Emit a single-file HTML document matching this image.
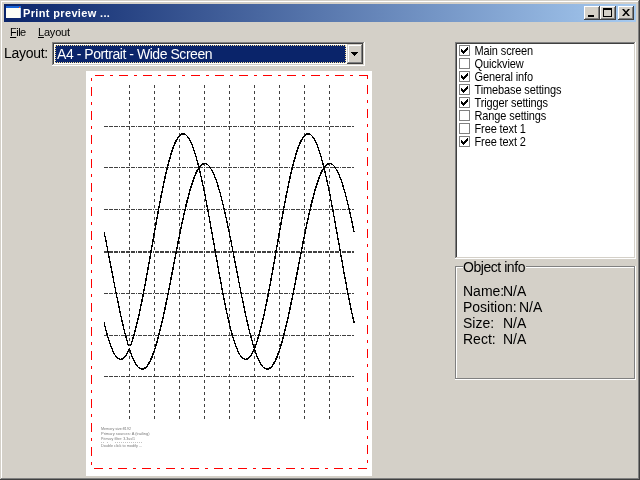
<!DOCTYPE html>
<html><head><meta charset="utf-8"><style>
*{margin:0;padding:0;box-sizing:border-box}
html,body{width:640px;height:480px;overflow:hidden;background:#D4D0C8;font-family:'Liberation Sans',sans-serif;}
.a{position:absolute}
.g{transform:translateZ(0)}
.t{position:absolute;white-space:pre;color:#000;transform:translateZ(0)}
.lt{position:absolute;font-size:11px;line-height:13px;letter-spacing:-0.12px;color:#000;white-space:pre;transform:translateZ(0) scaleY(1.12);transform-origin:0 10.3px}
.btn{position:absolute;width:16px;height:14px;background:#D4D0C8;box-shadow:inset -1px -1px #404040,inset 1px 1px #fff,inset -2px -2px #808080,inset 2px 2px #D4D0C8}
</style></head><body>
<div class="a" style="left:0;top:0;width:640px;height:480px;background:#D4D0C8;box-shadow:inset -1px -1px #404040,inset 1px 1px #D4D0C8,inset -2px -2px #808080,inset 2px 2px #fff"></div>
<div class="a" style="left:4px;top:4px;width:632px;height:18px;background:linear-gradient(to right,#0A246A,#A6CAF0)"></div>
<div class="a" style="left:6px;top:6px;width:15px;height:12px;background:#fdfdf5;border-top:2px solid #1a64d8;box-shadow:inset -1px 0 #c8d8f0"></div>
<div class="a" style="left:19px;top:7px;width:1px;height:1px;background:#f06020"></div>
<div class="t" style="left:23px;top:4px;height:18px;line-height:18px;font-size:11px;font-weight:bold;color:#fff;letter-spacing:0.35px">Print preview ...</div>
<div class="btn" style="left:584px;top:6px"><div class="a" style="left:4px;top:9px;width:6px;height:2px;background:#000"></div></div>
<div class="btn" style="left:600px;top:6px"><div class="a" style="left:3px;top:2px;width:9px;height:9px;border:1px solid #000;border-top-width:2px"></div></div>
<div class="btn" style="left:618px;top:6px"><svg class="a" style="left:4px;top:3px" width="8" height="7"><path d="M0 0h2l2 2.5 2-2.5h2l-3 3.5 3 3.5h-2l-2-2.5-2 2.5h-2l3-3.5z" fill="#000"/></svg></div>
<div class="t" style="left:10px;top:23px;height:18px;line-height:18px;font-size:11px;letter-spacing:-0.5px"><span style="text-decoration:underline">F</span>ile</div>
<div class="t" style="left:38px;top:23px;height:18px;line-height:18px;font-size:11px;letter-spacing:-0.2px"><span style="text-decoration:underline">L</span>ayout</div>
<div class="t" style="left:4px;top:41px;height:24px;line-height:24px;font-size:14px;letter-spacing:-0.3px">Layout:</div>
<div class="a" style="left:52px;top:42px;width:313px;height:24px;background:#fff;box-shadow:inset -1px -1px #fff,inset 1px 1px #808080,inset -2px -2px #D4D0C8,inset 2px 2px #404040"></div>
<div class="a" style="left:55px;top:45px;width:291px;height:18px;background:#0A246A;outline:1px dotted #F5DB95;outline-offset:-1px"></div>
<div class="t" style="left:57px;top:44px;height:20px;line-height:20px;font-size:14px;letter-spacing:-0.45px;color:#fff">A4 - Portrait - Wide Screen</div>
<div class="btn" style="left:347px;top:44px;width:16px;height:20px;box-shadow:inset -1px -1px #404040,inset 1px 1px #D4D0C8,inset -2px -2px #808080,inset 2px 2px #fff"><svg class="a" style="left:4px;top:8px" width="7" height="4" shape-rendering="crispEdges"><rect x="0" y="0" width="7" height="1"/><rect x="1" y="1" width="5" height="1"/><rect x="2" y="2" width="3" height="1"/><rect x="3" y="3" width="1" height="1"/></svg></div>
<div class="a" style="left:86px;top:71px;width:286px;height:405px;background:#fff"><svg width="286" height="405" viewBox="0 0 286 405" style="position:absolute;left:0;top:0"><g shape-rendering="crispEdges"><rect x="9" y="4" width="9" height="1" fill="#FF0000"/><rect x="24" y="4" width="3" height="1" fill="#FF0000"/><rect x="33" y="4" width="9" height="1" fill="#FF0000"/><rect x="48" y="4" width="3" height="1" fill="#FF0000"/><rect x="57" y="4" width="9" height="1" fill="#FF0000"/><rect x="72" y="4" width="3" height="1" fill="#FF0000"/><rect x="81" y="4" width="9" height="1" fill="#FF0000"/><rect x="96" y="4" width="3" height="1" fill="#FF0000"/><rect x="105" y="4" width="9" height="1" fill="#FF0000"/><rect x="120" y="4" width="3" height="1" fill="#FF0000"/><rect x="129" y="4" width="9" height="1" fill="#FF0000"/><rect x="144" y="4" width="3" height="1" fill="#FF0000"/><rect x="153" y="4" width="9" height="1" fill="#FF0000"/><rect x="168" y="4" width="3" height="1" fill="#FF0000"/><rect x="177" y="4" width="9" height="1" fill="#FF0000"/><rect x="192" y="4" width="3" height="1" fill="#FF0000"/><rect x="201" y="4" width="9" height="1" fill="#FF0000"/><rect x="216" y="4" width="3" height="1" fill="#FF0000"/><rect x="225" y="4" width="9" height="1" fill="#FF0000"/><rect x="240" y="4" width="3" height="1" fill="#FF0000"/><rect x="249" y="4" width="9" height="1" fill="#FF0000"/><rect x="264" y="4" width="3" height="1" fill="#FF0000"/><rect x="273" y="4" width="9" height="1" fill="#FF0000"/><rect x="8" y="397" width="9" height="1" fill="#FF0000"/><rect x="23" y="397" width="3" height="1" fill="#FF0000"/><rect x="32" y="397" width="9" height="1" fill="#FF0000"/><rect x="47" y="397" width="3" height="1" fill="#FF0000"/><rect x="56" y="397" width="9" height="1" fill="#FF0000"/><rect x="71" y="397" width="3" height="1" fill="#FF0000"/><rect x="80" y="397" width="9" height="1" fill="#FF0000"/><rect x="95" y="397" width="3" height="1" fill="#FF0000"/><rect x="104" y="397" width="9" height="1" fill="#FF0000"/><rect x="119" y="397" width="3" height="1" fill="#FF0000"/><rect x="128" y="397" width="9" height="1" fill="#FF0000"/><rect x="143" y="397" width="3" height="1" fill="#FF0000"/><rect x="152" y="397" width="9" height="1" fill="#FF0000"/><rect x="167" y="397" width="3" height="1" fill="#FF0000"/><rect x="176" y="397" width="9" height="1" fill="#FF0000"/><rect x="191" y="397" width="3" height="1" fill="#FF0000"/><rect x="200" y="397" width="9" height="1" fill="#FF0000"/><rect x="215" y="397" width="3" height="1" fill="#FF0000"/><rect x="224" y="397" width="9" height="1" fill="#FF0000"/><rect x="239" y="397" width="3" height="1" fill="#FF0000"/><rect x="248" y="397" width="9" height="1" fill="#FF0000"/><rect x="263" y="397" width="3" height="1" fill="#FF0000"/><rect x="272" y="397" width="9" height="1" fill="#FF0000"/><rect x="5" y="16" width="1" height="9" fill="#FF0000"/><rect x="5" y="7" width="1" height="3" fill="#FF0000"/><rect x="5" y="40" width="1" height="9" fill="#FF0000"/><rect x="5" y="31" width="1" height="3" fill="#FF0000"/><rect x="5" y="64" width="1" height="9" fill="#FF0000"/><rect x="5" y="55" width="1" height="3" fill="#FF0000"/><rect x="5" y="88" width="1" height="9" fill="#FF0000"/><rect x="5" y="79" width="1" height="3" fill="#FF0000"/><rect x="5" y="112" width="1" height="9" fill="#FF0000"/><rect x="5" y="103" width="1" height="3" fill="#FF0000"/><rect x="5" y="136" width="1" height="9" fill="#FF0000"/><rect x="5" y="127" width="1" height="3" fill="#FF0000"/><rect x="5" y="160" width="1" height="9" fill="#FF0000"/><rect x="5" y="151" width="1" height="3" fill="#FF0000"/><rect x="5" y="184" width="1" height="9" fill="#FF0000"/><rect x="5" y="175" width="1" height="3" fill="#FF0000"/><rect x="5" y="208" width="1" height="9" fill="#FF0000"/><rect x="5" y="199" width="1" height="3" fill="#FF0000"/><rect x="5" y="232" width="1" height="9" fill="#FF0000"/><rect x="5" y="223" width="1" height="3" fill="#FF0000"/><rect x="5" y="256" width="1" height="9" fill="#FF0000"/><rect x="5" y="247" width="1" height="3" fill="#FF0000"/><rect x="5" y="280" width="1" height="9" fill="#FF0000"/><rect x="5" y="271" width="1" height="3" fill="#FF0000"/><rect x="5" y="304" width="1" height="9" fill="#FF0000"/><rect x="5" y="295" width="1" height="3" fill="#FF0000"/><rect x="5" y="328" width="1" height="9" fill="#FF0000"/><rect x="5" y="319" width="1" height="3" fill="#FF0000"/><rect x="5" y="352" width="1" height="9" fill="#FF0000"/><rect x="5" y="343" width="1" height="3" fill="#FF0000"/><rect x="5" y="376" width="1" height="9" fill="#FF0000"/><rect x="5" y="367" width="1" height="3" fill="#FF0000"/><rect x="5" y="391" width="1" height="3" fill="#FF0000"/><rect x="281" y="14" width="1" height="9" fill="#FF0000"/><rect x="281" y="5" width="1" height="3" fill="#FF0000"/><rect x="281" y="38" width="1" height="9" fill="#FF0000"/><rect x="281" y="29" width="1" height="3" fill="#FF0000"/><rect x="281" y="62" width="1" height="9" fill="#FF0000"/><rect x="281" y="53" width="1" height="3" fill="#FF0000"/><rect x="281" y="86" width="1" height="9" fill="#FF0000"/><rect x="281" y="77" width="1" height="3" fill="#FF0000"/><rect x="281" y="110" width="1" height="9" fill="#FF0000"/><rect x="281" y="101" width="1" height="3" fill="#FF0000"/><rect x="281" y="134" width="1" height="9" fill="#FF0000"/><rect x="281" y="125" width="1" height="3" fill="#FF0000"/><rect x="281" y="158" width="1" height="9" fill="#FF0000"/><rect x="281" y="149" width="1" height="3" fill="#FF0000"/><rect x="281" y="182" width="1" height="9" fill="#FF0000"/><rect x="281" y="173" width="1" height="3" fill="#FF0000"/><rect x="281" y="206" width="1" height="9" fill="#FF0000"/><rect x="281" y="197" width="1" height="3" fill="#FF0000"/><rect x="281" y="230" width="1" height="9" fill="#FF0000"/><rect x="281" y="221" width="1" height="3" fill="#FF0000"/><rect x="281" y="254" width="1" height="9" fill="#FF0000"/><rect x="281" y="245" width="1" height="3" fill="#FF0000"/><rect x="281" y="278" width="1" height="9" fill="#FF0000"/><rect x="281" y="269" width="1" height="3" fill="#FF0000"/><rect x="281" y="302" width="1" height="9" fill="#FF0000"/><rect x="281" y="293" width="1" height="3" fill="#FF0000"/><rect x="281" y="326" width="1" height="9" fill="#FF0000"/><rect x="281" y="317" width="1" height="3" fill="#FF0000"/><rect x="281" y="350" width="1" height="9" fill="#FF0000"/><rect x="281" y="341" width="1" height="3" fill="#FF0000"/><rect x="281" y="374" width="1" height="9" fill="#FF0000"/><rect x="281" y="365" width="1" height="3" fill="#FF0000"/><rect x="281" y="389" width="1" height="3" fill="#FF0000"/><rect x="43" y="14" width="1" height="3" fill="#404040"/><rect x="43" y="20" width="1" height="3" fill="#404040"/><rect x="43" y="26" width="1" height="3" fill="#404040"/><rect x="43" y="32" width="1" height="3" fill="#404040"/><rect x="43" y="38" width="1" height="3" fill="#404040"/><rect x="43" y="44" width="1" height="3" fill="#404040"/><rect x="43" y="50" width="1" height="3" fill="#404040"/><rect x="43" y="56" width="1" height="3" fill="#404040"/><rect x="43" y="62" width="1" height="3" fill="#404040"/><rect x="43" y="68" width="1" height="3" fill="#404040"/><rect x="43" y="74" width="1" height="3" fill="#404040"/><rect x="43" y="80" width="1" height="3" fill="#404040"/><rect x="43" y="86" width="1" height="3" fill="#404040"/><rect x="43" y="92" width="1" height="3" fill="#404040"/><rect x="43" y="98" width="1" height="3" fill="#404040"/><rect x="43" y="104" width="1" height="3" fill="#404040"/><rect x="43" y="110" width="1" height="3" fill="#404040"/><rect x="43" y="116" width="1" height="3" fill="#404040"/><rect x="43" y="122" width="1" height="3" fill="#404040"/><rect x="43" y="128" width="1" height="3" fill="#404040"/><rect x="43" y="134" width="1" height="3" fill="#404040"/><rect x="43" y="140" width="1" height="3" fill="#404040"/><rect x="43" y="146" width="1" height="3" fill="#404040"/><rect x="43" y="152" width="1" height="3" fill="#404040"/><rect x="43" y="158" width="1" height="3" fill="#404040"/><rect x="43" y="164" width="1" height="3" fill="#404040"/><rect x="43" y="170" width="1" height="3" fill="#404040"/><rect x="43" y="176" width="1" height="3" fill="#404040"/><rect x="43" y="183" width="1" height="3" fill="#404040"/><rect x="43" y="189" width="1" height="3" fill="#404040"/><rect x="43" y="195" width="1" height="3" fill="#404040"/><rect x="43" y="201" width="1" height="3" fill="#404040"/><rect x="43" y="207" width="1" height="3" fill="#404040"/><rect x="43" y="213" width="1" height="3" fill="#404040"/><rect x="43" y="219" width="1" height="3" fill="#404040"/><rect x="43" y="225" width="1" height="3" fill="#404040"/><rect x="43" y="231" width="1" height="3" fill="#404040"/><rect x="43" y="237" width="1" height="3" fill="#404040"/><rect x="43" y="243" width="1" height="3" fill="#404040"/><rect x="43" y="249" width="1" height="3" fill="#404040"/><rect x="43" y="255" width="1" height="3" fill="#404040"/><rect x="43" y="261" width="1" height="3" fill="#404040"/><rect x="43" y="267" width="1" height="3" fill="#404040"/><rect x="43" y="273" width="1" height="3" fill="#404040"/><rect x="43" y="279" width="1" height="3" fill="#404040"/><rect x="43" y="285" width="1" height="3" fill="#404040"/><rect x="43" y="291" width="1" height="3" fill="#404040"/><rect x="43" y="297" width="1" height="3" fill="#404040"/><rect x="43" y="303" width="1" height="3" fill="#404040"/><rect x="43" y="309" width="1" height="3" fill="#404040"/><rect x="43" y="315" width="1" height="3" fill="#404040"/><rect x="43" y="321" width="1" height="3" fill="#404040"/><rect x="43" y="327" width="1" height="3" fill="#404040"/><rect x="43" y="333" width="1" height="3" fill="#404040"/><rect x="43" y="339" width="1" height="3" fill="#404040"/><rect x="43" y="345" width="1" height="3" fill="#404040"/><rect x="68" y="14" width="1" height="3" fill="#404040"/><rect x="68" y="20" width="1" height="3" fill="#404040"/><rect x="68" y="26" width="1" height="3" fill="#404040"/><rect x="68" y="32" width="1" height="3" fill="#404040"/><rect x="68" y="38" width="1" height="3" fill="#404040"/><rect x="68" y="44" width="1" height="3" fill="#404040"/><rect x="68" y="50" width="1" height="3" fill="#404040"/><rect x="68" y="56" width="1" height="3" fill="#404040"/><rect x="68" y="62" width="1" height="3" fill="#404040"/><rect x="68" y="68" width="1" height="3" fill="#404040"/><rect x="68" y="74" width="1" height="3" fill="#404040"/><rect x="68" y="80" width="1" height="3" fill="#404040"/><rect x="68" y="86" width="1" height="3" fill="#404040"/><rect x="68" y="92" width="1" height="3" fill="#404040"/><rect x="68" y="98" width="1" height="3" fill="#404040"/><rect x="68" y="104" width="1" height="3" fill="#404040"/><rect x="68" y="110" width="1" height="3" fill="#404040"/><rect x="68" y="116" width="1" height="3" fill="#404040"/><rect x="68" y="122" width="1" height="3" fill="#404040"/><rect x="68" y="128" width="1" height="3" fill="#404040"/><rect x="68" y="134" width="1" height="3" fill="#404040"/><rect x="68" y="140" width="1" height="3" fill="#404040"/><rect x="68" y="146" width="1" height="3" fill="#404040"/><rect x="68" y="152" width="1" height="3" fill="#404040"/><rect x="68" y="158" width="1" height="3" fill="#404040"/><rect x="68" y="164" width="1" height="3" fill="#404040"/><rect x="68" y="170" width="1" height="3" fill="#404040"/><rect x="68" y="176" width="1" height="3" fill="#404040"/><rect x="68" y="183" width="1" height="3" fill="#404040"/><rect x="68" y="189" width="1" height="3" fill="#404040"/><rect x="68" y="195" width="1" height="3" fill="#404040"/><rect x="68" y="201" width="1" height="3" fill="#404040"/><rect x="68" y="207" width="1" height="3" fill="#404040"/><rect x="68" y="213" width="1" height="3" fill="#404040"/><rect x="68" y="219" width="1" height="3" fill="#404040"/><rect x="68" y="225" width="1" height="3" fill="#404040"/><rect x="68" y="231" width="1" height="3" fill="#404040"/><rect x="68" y="237" width="1" height="3" fill="#404040"/><rect x="68" y="243" width="1" height="3" fill="#404040"/><rect x="68" y="249" width="1" height="3" fill="#404040"/><rect x="68" y="255" width="1" height="3" fill="#404040"/><rect x="68" y="261" width="1" height="3" fill="#404040"/><rect x="68" y="267" width="1" height="3" fill="#404040"/><rect x="68" y="273" width="1" height="3" fill="#404040"/><rect x="68" y="279" width="1" height="3" fill="#404040"/><rect x="68" y="285" width="1" height="3" fill="#404040"/><rect x="68" y="291" width="1" height="3" fill="#404040"/><rect x="68" y="297" width="1" height="3" fill="#404040"/><rect x="68" y="303" width="1" height="3" fill="#404040"/><rect x="68" y="309" width="1" height="3" fill="#404040"/><rect x="68" y="315" width="1" height="3" fill="#404040"/><rect x="68" y="321" width="1" height="3" fill="#404040"/><rect x="68" y="327" width="1" height="3" fill="#404040"/><rect x="68" y="333" width="1" height="3" fill="#404040"/><rect x="68" y="339" width="1" height="3" fill="#404040"/><rect x="68" y="345" width="1" height="3" fill="#404040"/><rect x="93" y="14" width="1" height="3" fill="#404040"/><rect x="93" y="20" width="1" height="3" fill="#404040"/><rect x="93" y="26" width="1" height="3" fill="#404040"/><rect x="93" y="32" width="1" height="3" fill="#404040"/><rect x="93" y="38" width="1" height="3" fill="#404040"/><rect x="93" y="44" width="1" height="3" fill="#404040"/><rect x="93" y="50" width="1" height="3" fill="#404040"/><rect x="93" y="56" width="1" height="3" fill="#404040"/><rect x="93" y="62" width="1" height="3" fill="#404040"/><rect x="93" y="68" width="1" height="3" fill="#404040"/><rect x="93" y="74" width="1" height="3" fill="#404040"/><rect x="93" y="80" width="1" height="3" fill="#404040"/><rect x="93" y="86" width="1" height="3" fill="#404040"/><rect x="93" y="92" width="1" height="3" fill="#404040"/><rect x="93" y="98" width="1" height="3" fill="#404040"/><rect x="93" y="104" width="1" height="3" fill="#404040"/><rect x="93" y="110" width="1" height="3" fill="#404040"/><rect x="93" y="116" width="1" height="3" fill="#404040"/><rect x="93" y="122" width="1" height="3" fill="#404040"/><rect x="93" y="128" width="1" height="3" fill="#404040"/><rect x="93" y="134" width="1" height="3" fill="#404040"/><rect x="93" y="140" width="1" height="3" fill="#404040"/><rect x="93" y="146" width="1" height="3" fill="#404040"/><rect x="93" y="152" width="1" height="3" fill="#404040"/><rect x="93" y="158" width="1" height="3" fill="#404040"/><rect x="93" y="164" width="1" height="3" fill="#404040"/><rect x="93" y="170" width="1" height="3" fill="#404040"/><rect x="93" y="176" width="1" height="3" fill="#404040"/><rect x="93" y="183" width="1" height="3" fill="#404040"/><rect x="93" y="189" width="1" height="3" fill="#404040"/><rect x="93" y="195" width="1" height="3" fill="#404040"/><rect x="93" y="201" width="1" height="3" fill="#404040"/><rect x="93" y="207" width="1" height="3" fill="#404040"/><rect x="93" y="213" width="1" height="3" fill="#404040"/><rect x="93" y="219" width="1" height="3" fill="#404040"/><rect x="93" y="225" width="1" height="3" fill="#404040"/><rect x="93" y="231" width="1" height="3" fill="#404040"/><rect x="93" y="237" width="1" height="3" fill="#404040"/><rect x="93" y="243" width="1" height="3" fill="#404040"/><rect x="93" y="249" width="1" height="3" fill="#404040"/><rect x="93" y="255" width="1" height="3" fill="#404040"/><rect x="93" y="261" width="1" height="3" fill="#404040"/><rect x="93" y="267" width="1" height="3" fill="#404040"/><rect x="93" y="273" width="1" height="3" fill="#404040"/><rect x="93" y="279" width="1" height="3" fill="#404040"/><rect x="93" y="285" width="1" height="3" fill="#404040"/><rect x="93" y="291" width="1" height="3" fill="#404040"/><rect x="93" y="297" width="1" height="3" fill="#404040"/><rect x="93" y="303" width="1" height="3" fill="#404040"/><rect x="93" y="309" width="1" height="3" fill="#404040"/><rect x="93" y="315" width="1" height="3" fill="#404040"/><rect x="93" y="321" width="1" height="3" fill="#404040"/><rect x="93" y="327" width="1" height="3" fill="#404040"/><rect x="93" y="333" width="1" height="3" fill="#404040"/><rect x="93" y="339" width="1" height="3" fill="#404040"/><rect x="93" y="345" width="1" height="3" fill="#404040"/><rect x="118" y="14" width="1" height="3" fill="#404040"/><rect x="118" y="20" width="1" height="3" fill="#404040"/><rect x="118" y="26" width="1" height="3" fill="#404040"/><rect x="118" y="32" width="1" height="3" fill="#404040"/><rect x="118" y="38" width="1" height="3" fill="#404040"/><rect x="118" y="44" width="1" height="3" fill="#404040"/><rect x="118" y="50" width="1" height="3" fill="#404040"/><rect x="118" y="56" width="1" height="3" fill="#404040"/><rect x="118" y="62" width="1" height="3" fill="#404040"/><rect x="118" y="68" width="1" height="3" fill="#404040"/><rect x="118" y="74" width="1" height="3" fill="#404040"/><rect x="118" y="80" width="1" height="3" fill="#404040"/><rect x="118" y="86" width="1" height="3" fill="#404040"/><rect x="118" y="92" width="1" height="3" fill="#404040"/><rect x="118" y="98" width="1" height="3" fill="#404040"/><rect x="118" y="104" width="1" height="3" fill="#404040"/><rect x="118" y="110" width="1" height="3" fill="#404040"/><rect x="118" y="116" width="1" height="3" fill="#404040"/><rect x="118" y="122" width="1" height="3" fill="#404040"/><rect x="118" y="128" width="1" height="3" fill="#404040"/><rect x="118" y="134" width="1" height="3" fill="#404040"/><rect x="118" y="140" width="1" height="3" fill="#404040"/><rect x="118" y="146" width="1" height="3" fill="#404040"/><rect x="118" y="152" width="1" height="3" fill="#404040"/><rect x="118" y="158" width="1" height="3" fill="#404040"/><rect x="118" y="164" width="1" height="3" fill="#404040"/><rect x="118" y="170" width="1" height="3" fill="#404040"/><rect x="118" y="176" width="1" height="3" fill="#404040"/><rect x="118" y="183" width="1" height="3" fill="#404040"/><rect x="118" y="189" width="1" height="3" fill="#404040"/><rect x="118" y="195" width="1" height="3" fill="#404040"/><rect x="118" y="201" width="1" height="3" fill="#404040"/><rect x="118" y="207" width="1" height="3" fill="#404040"/><rect x="118" y="213" width="1" height="3" fill="#404040"/><rect x="118" y="219" width="1" height="3" fill="#404040"/><rect x="118" y="225" width="1" height="3" fill="#404040"/><rect x="118" y="231" width="1" height="3" fill="#404040"/><rect x="118" y="237" width="1" height="3" fill="#404040"/><rect x="118" y="243" width="1" height="3" fill="#404040"/><rect x="118" y="249" width="1" height="3" fill="#404040"/><rect x="118" y="255" width="1" height="3" fill="#404040"/><rect x="118" y="261" width="1" height="3" fill="#404040"/><rect x="118" y="267" width="1" height="3" fill="#404040"/><rect x="118" y="273" width="1" height="3" fill="#404040"/><rect x="118" y="279" width="1" height="3" fill="#404040"/><rect x="118" y="285" width="1" height="3" fill="#404040"/><rect x="118" y="291" width="1" height="3" fill="#404040"/><rect x="118" y="297" width="1" height="3" fill="#404040"/><rect x="118" y="303" width="1" height="3" fill="#404040"/><rect x="118" y="309" width="1" height="3" fill="#404040"/><rect x="118" y="315" width="1" height="3" fill="#404040"/><rect x="118" y="321" width="1" height="3" fill="#404040"/><rect x="118" y="327" width="1" height="3" fill="#404040"/><rect x="118" y="333" width="1" height="3" fill="#404040"/><rect x="118" y="339" width="1" height="3" fill="#404040"/><rect x="118" y="345" width="1" height="3" fill="#404040"/><rect x="143" y="14" width="1" height="3" fill="#404040"/><rect x="143" y="20" width="1" height="3" fill="#404040"/><rect x="143" y="26" width="1" height="3" fill="#404040"/><rect x="143" y="32" width="1" height="3" fill="#404040"/><rect x="143" y="38" width="1" height="3" fill="#404040"/><rect x="143" y="44" width="1" height="3" fill="#404040"/><rect x="143" y="50" width="1" height="3" fill="#404040"/><rect x="143" y="56" width="1" height="3" fill="#404040"/><rect x="143" y="62" width="1" height="3" fill="#404040"/><rect x="143" y="68" width="1" height="3" fill="#404040"/><rect x="143" y="74" width="1" height="3" fill="#404040"/><rect x="143" y="80" width="1" height="3" fill="#404040"/><rect x="143" y="86" width="1" height="3" fill="#404040"/><rect x="143" y="92" width="1" height="3" fill="#404040"/><rect x="143" y="98" width="1" height="3" fill="#404040"/><rect x="143" y="104" width="1" height="3" fill="#404040"/><rect x="143" y="110" width="1" height="3" fill="#404040"/><rect x="143" y="116" width="1" height="3" fill="#404040"/><rect x="143" y="122" width="1" height="3" fill="#404040"/><rect x="143" y="128" width="1" height="3" fill="#404040"/><rect x="143" y="134" width="1" height="3" fill="#404040"/><rect x="143" y="140" width="1" height="3" fill="#404040"/><rect x="143" y="146" width="1" height="3" fill="#404040"/><rect x="143" y="152" width="1" height="3" fill="#404040"/><rect x="143" y="158" width="1" height="3" fill="#404040"/><rect x="143" y="164" width="1" height="3" fill="#404040"/><rect x="143" y="170" width="1" height="3" fill="#404040"/><rect x="143" y="176" width="1" height="3" fill="#404040"/><rect x="143" y="183" width="1" height="3" fill="#404040"/><rect x="143" y="189" width="1" height="3" fill="#404040"/><rect x="143" y="195" width="1" height="3" fill="#404040"/><rect x="143" y="201" width="1" height="3" fill="#404040"/><rect x="143" y="207" width="1" height="3" fill="#404040"/><rect x="143" y="213" width="1" height="3" fill="#404040"/><rect x="143" y="219" width="1" height="3" fill="#404040"/><rect x="143" y="225" width="1" height="3" fill="#404040"/><rect x="143" y="231" width="1" height="3" fill="#404040"/><rect x="143" y="237" width="1" height="3" fill="#404040"/><rect x="143" y="243" width="1" height="3" fill="#404040"/><rect x="143" y="249" width="1" height="3" fill="#404040"/><rect x="143" y="255" width="1" height="3" fill="#404040"/><rect x="143" y="261" width="1" height="3" fill="#404040"/><rect x="143" y="267" width="1" height="3" fill="#404040"/><rect x="143" y="273" width="1" height="3" fill="#404040"/><rect x="143" y="279" width="1" height="3" fill="#404040"/><rect x="143" y="285" width="1" height="3" fill="#404040"/><rect x="143" y="291" width="1" height="3" fill="#404040"/><rect x="143" y="297" width="1" height="3" fill="#404040"/><rect x="143" y="303" width="1" height="3" fill="#404040"/><rect x="143" y="309" width="1" height="3" fill="#404040"/><rect x="143" y="315" width="1" height="3" fill="#404040"/><rect x="143" y="321" width="1" height="3" fill="#404040"/><rect x="143" y="327" width="1" height="3" fill="#404040"/><rect x="143" y="333" width="1" height="3" fill="#404040"/><rect x="143" y="339" width="1" height="3" fill="#404040"/><rect x="143" y="345" width="1" height="3" fill="#404040"/><rect x="168" y="14" width="1" height="3" fill="#404040"/><rect x="168" y="20" width="1" height="3" fill="#404040"/><rect x="168" y="26" width="1" height="3" fill="#404040"/><rect x="168" y="32" width="1" height="3" fill="#404040"/><rect x="168" y="38" width="1" height="3" fill="#404040"/><rect x="168" y="44" width="1" height="3" fill="#404040"/><rect x="168" y="50" width="1" height="3" fill="#404040"/><rect x="168" y="56" width="1" height="3" fill="#404040"/><rect x="168" y="62" width="1" height="3" fill="#404040"/><rect x="168" y="68" width="1" height="3" fill="#404040"/><rect x="168" y="74" width="1" height="3" fill="#404040"/><rect x="168" y="80" width="1" height="3" fill="#404040"/><rect x="168" y="86" width="1" height="3" fill="#404040"/><rect x="168" y="92" width="1" height="3" fill="#404040"/><rect x="168" y="98" width="1" height="3" fill="#404040"/><rect x="168" y="104" width="1" height="3" fill="#404040"/><rect x="168" y="110" width="1" height="3" fill="#404040"/><rect x="168" y="116" width="1" height="3" fill="#404040"/><rect x="168" y="122" width="1" height="3" fill="#404040"/><rect x="168" y="128" width="1" height="3" fill="#404040"/><rect x="168" y="134" width="1" height="3" fill="#404040"/><rect x="168" y="140" width="1" height="3" fill="#404040"/><rect x="168" y="146" width="1" height="3" fill="#404040"/><rect x="168" y="152" width="1" height="3" fill="#404040"/><rect x="168" y="158" width="1" height="3" fill="#404040"/><rect x="168" y="164" width="1" height="3" fill="#404040"/><rect x="168" y="170" width="1" height="3" fill="#404040"/><rect x="168" y="176" width="1" height="3" fill="#404040"/><rect x="168" y="183" width="1" height="3" fill="#404040"/><rect x="168" y="189" width="1" height="3" fill="#404040"/><rect x="168" y="195" width="1" height="3" fill="#404040"/><rect x="168" y="201" width="1" height="3" fill="#404040"/><rect x="168" y="207" width="1" height="3" fill="#404040"/><rect x="168" y="213" width="1" height="3" fill="#404040"/><rect x="168" y="219" width="1" height="3" fill="#404040"/><rect x="168" y="225" width="1" height="3" fill="#404040"/><rect x="168" y="231" width="1" height="3" fill="#404040"/><rect x="168" y="237" width="1" height="3" fill="#404040"/><rect x="168" y="243" width="1" height="3" fill="#404040"/><rect x="168" y="249" width="1" height="3" fill="#404040"/><rect x="168" y="255" width="1" height="3" fill="#404040"/><rect x="168" y="261" width="1" height="3" fill="#404040"/><rect x="168" y="267" width="1" height="3" fill="#404040"/><rect x="168" y="273" width="1" height="3" fill="#404040"/><rect x="168" y="279" width="1" height="3" fill="#404040"/><rect x="168" y="285" width="1" height="3" fill="#404040"/><rect x="168" y="291" width="1" height="3" fill="#404040"/><rect x="168" y="297" width="1" height="3" fill="#404040"/><rect x="168" y="303" width="1" height="3" fill="#404040"/><rect x="168" y="309" width="1" height="3" fill="#404040"/><rect x="168" y="315" width="1" height="3" fill="#404040"/><rect x="168" y="321" width="1" height="3" fill="#404040"/><rect x="168" y="327" width="1" height="3" fill="#404040"/><rect x="168" y="333" width="1" height="3" fill="#404040"/><rect x="168" y="339" width="1" height="3" fill="#404040"/><rect x="168" y="345" width="1" height="3" fill="#404040"/><rect x="193" y="14" width="1" height="3" fill="#404040"/><rect x="193" y="20" width="1" height="3" fill="#404040"/><rect x="193" y="26" width="1" height="3" fill="#404040"/><rect x="193" y="32" width="1" height="3" fill="#404040"/><rect x="193" y="38" width="1" height="3" fill="#404040"/><rect x="193" y="44" width="1" height="3" fill="#404040"/><rect x="193" y="50" width="1" height="3" fill="#404040"/><rect x="193" y="56" width="1" height="3" fill="#404040"/><rect x="193" y="62" width="1" height="3" fill="#404040"/><rect x="193" y="68" width="1" height="3" fill="#404040"/><rect x="193" y="74" width="1" height="3" fill="#404040"/><rect x="193" y="80" width="1" height="3" fill="#404040"/><rect x="193" y="86" width="1" height="3" fill="#404040"/><rect x="193" y="92" width="1" height="3" fill="#404040"/><rect x="193" y="98" width="1" height="3" fill="#404040"/><rect x="193" y="104" width="1" height="3" fill="#404040"/><rect x="193" y="110" width="1" height="3" fill="#404040"/><rect x="193" y="116" width="1" height="3" fill="#404040"/><rect x="193" y="122" width="1" height="3" fill="#404040"/><rect x="193" y="128" width="1" height="3" fill="#404040"/><rect x="193" y="134" width="1" height="3" fill="#404040"/><rect x="193" y="140" width="1" height="3" fill="#404040"/><rect x="193" y="146" width="1" height="3" fill="#404040"/><rect x="193" y="152" width="1" height="3" fill="#404040"/><rect x="193" y="158" width="1" height="3" fill="#404040"/><rect x="193" y="164" width="1" height="3" fill="#404040"/><rect x="193" y="170" width="1" height="3" fill="#404040"/><rect x="193" y="176" width="1" height="3" fill="#404040"/><rect x="193" y="183" width="1" height="3" fill="#404040"/><rect x="193" y="189" width="1" height="3" fill="#404040"/><rect x="193" y="195" width="1" height="3" fill="#404040"/><rect x="193" y="201" width="1" height="3" fill="#404040"/><rect x="193" y="207" width="1" height="3" fill="#404040"/><rect x="193" y="213" width="1" height="3" fill="#404040"/><rect x="193" y="219" width="1" height="3" fill="#404040"/><rect x="193" y="225" width="1" height="3" fill="#404040"/><rect x="193" y="231" width="1" height="3" fill="#404040"/><rect x="193" y="237" width="1" height="3" fill="#404040"/><rect x="193" y="243" width="1" height="3" fill="#404040"/><rect x="193" y="249" width="1" height="3" fill="#404040"/><rect x="193" y="255" width="1" height="3" fill="#404040"/><rect x="193" y="261" width="1" height="3" fill="#404040"/><rect x="193" y="267" width="1" height="3" fill="#404040"/><rect x="193" y="273" width="1" height="3" fill="#404040"/><rect x="193" y="279" width="1" height="3" fill="#404040"/><rect x="193" y="285" width="1" height="3" fill="#404040"/><rect x="193" y="291" width="1" height="3" fill="#404040"/><rect x="193" y="297" width="1" height="3" fill="#404040"/><rect x="193" y="303" width="1" height="3" fill="#404040"/><rect x="193" y="309" width="1" height="3" fill="#404040"/><rect x="193" y="315" width="1" height="3" fill="#404040"/><rect x="193" y="321" width="1" height="3" fill="#404040"/><rect x="193" y="327" width="1" height="3" fill="#404040"/><rect x="193" y="333" width="1" height="3" fill="#404040"/><rect x="193" y="339" width="1" height="3" fill="#404040"/><rect x="193" y="345" width="1" height="3" fill="#404040"/><rect x="218" y="14" width="1" height="3" fill="#404040"/><rect x="218" y="20" width="1" height="3" fill="#404040"/><rect x="218" y="26" width="1" height="3" fill="#404040"/><rect x="218" y="32" width="1" height="3" fill="#404040"/><rect x="218" y="38" width="1" height="3" fill="#404040"/><rect x="218" y="44" width="1" height="3" fill="#404040"/><rect x="218" y="50" width="1" height="3" fill="#404040"/><rect x="218" y="56" width="1" height="3" fill="#404040"/><rect x="218" y="62" width="1" height="3" fill="#404040"/><rect x="218" y="68" width="1" height="3" fill="#404040"/><rect x="218" y="74" width="1" height="3" fill="#404040"/><rect x="218" y="80" width="1" height="3" fill="#404040"/><rect x="218" y="86" width="1" height="3" fill="#404040"/><rect x="218" y="92" width="1" height="3" fill="#404040"/><rect x="218" y="98" width="1" height="3" fill="#404040"/><rect x="218" y="104" width="1" height="3" fill="#404040"/><rect x="218" y="110" width="1" height="3" fill="#404040"/><rect x="218" y="116" width="1" height="3" fill="#404040"/><rect x="218" y="122" width="1" height="3" fill="#404040"/><rect x="218" y="128" width="1" height="3" fill="#404040"/><rect x="218" y="134" width="1" height="3" fill="#404040"/><rect x="218" y="140" width="1" height="3" fill="#404040"/><rect x="218" y="146" width="1" height="3" fill="#404040"/><rect x="218" y="152" width="1" height="3" fill="#404040"/><rect x="218" y="158" width="1" height="3" fill="#404040"/><rect x="218" y="164" width="1" height="3" fill="#404040"/><rect x="218" y="170" width="1" height="3" fill="#404040"/><rect x="218" y="176" width="1" height="3" fill="#404040"/><rect x="218" y="183" width="1" height="3" fill="#404040"/><rect x="218" y="189" width="1" height="3" fill="#404040"/><rect x="218" y="195" width="1" height="3" fill="#404040"/><rect x="218" y="201" width="1" height="3" fill="#404040"/><rect x="218" y="207" width="1" height="3" fill="#404040"/><rect x="218" y="213" width="1" height="3" fill="#404040"/><rect x="218" y="219" width="1" height="3" fill="#404040"/><rect x="218" y="225" width="1" height="3" fill="#404040"/><rect x="218" y="231" width="1" height="3" fill="#404040"/><rect x="218" y="237" width="1" height="3" fill="#404040"/><rect x="218" y="243" width="1" height="3" fill="#404040"/><rect x="218" y="249" width="1" height="3" fill="#404040"/><rect x="218" y="255" width="1" height="3" fill="#404040"/><rect x="218" y="261" width="1" height="3" fill="#404040"/><rect x="218" y="267" width="1" height="3" fill="#404040"/><rect x="218" y="273" width="1" height="3" fill="#404040"/><rect x="218" y="279" width="1" height="3" fill="#404040"/><rect x="218" y="285" width="1" height="3" fill="#404040"/><rect x="218" y="291" width="1" height="3" fill="#404040"/><rect x="218" y="297" width="1" height="3" fill="#404040"/><rect x="218" y="303" width="1" height="3" fill="#404040"/><rect x="218" y="309" width="1" height="3" fill="#404040"/><rect x="218" y="315" width="1" height="3" fill="#404040"/><rect x="218" y="321" width="1" height="3" fill="#404040"/><rect x="218" y="327" width="1" height="3" fill="#404040"/><rect x="218" y="333" width="1" height="3" fill="#404040"/><rect x="218" y="339" width="1" height="3" fill="#404040"/><rect x="218" y="345" width="1" height="3" fill="#404040"/><rect x="243" y="14" width="1" height="3" fill="#404040"/><rect x="243" y="20" width="1" height="3" fill="#404040"/><rect x="243" y="26" width="1" height="3" fill="#404040"/><rect x="243" y="32" width="1" height="3" fill="#404040"/><rect x="243" y="38" width="1" height="3" fill="#404040"/><rect x="243" y="44" width="1" height="3" fill="#404040"/><rect x="243" y="50" width="1" height="3" fill="#404040"/><rect x="243" y="56" width="1" height="3" fill="#404040"/><rect x="243" y="62" width="1" height="3" fill="#404040"/><rect x="243" y="68" width="1" height="3" fill="#404040"/><rect x="243" y="74" width="1" height="3" fill="#404040"/><rect x="243" y="80" width="1" height="3" fill="#404040"/><rect x="243" y="86" width="1" height="3" fill="#404040"/><rect x="243" y="92" width="1" height="3" fill="#404040"/><rect x="243" y="98" width="1" height="3" fill="#404040"/><rect x="243" y="104" width="1" height="3" fill="#404040"/><rect x="243" y="110" width="1" height="3" fill="#404040"/><rect x="243" y="116" width="1" height="3" fill="#404040"/><rect x="243" y="122" width="1" height="3" fill="#404040"/><rect x="243" y="128" width="1" height="3" fill="#404040"/><rect x="243" y="134" width="1" height="3" fill="#404040"/><rect x="243" y="140" width="1" height="3" fill="#404040"/><rect x="243" y="146" width="1" height="3" fill="#404040"/><rect x="243" y="152" width="1" height="3" fill="#404040"/><rect x="243" y="158" width="1" height="3" fill="#404040"/><rect x="243" y="164" width="1" height="3" fill="#404040"/><rect x="243" y="170" width="1" height="3" fill="#404040"/><rect x="243" y="176" width="1" height="3" fill="#404040"/><rect x="243" y="183" width="1" height="3" fill="#404040"/><rect x="243" y="189" width="1" height="3" fill="#404040"/><rect x="243" y="195" width="1" height="3" fill="#404040"/><rect x="243" y="201" width="1" height="3" fill="#404040"/><rect x="243" y="207" width="1" height="3" fill="#404040"/><rect x="243" y="213" width="1" height="3" fill="#404040"/><rect x="243" y="219" width="1" height="3" fill="#404040"/><rect x="243" y="225" width="1" height="3" fill="#404040"/><rect x="243" y="231" width="1" height="3" fill="#404040"/><rect x="243" y="237" width="1" height="3" fill="#404040"/><rect x="243" y="243" width="1" height="3" fill="#404040"/><rect x="243" y="249" width="1" height="3" fill="#404040"/><rect x="243" y="255" width="1" height="3" fill="#404040"/><rect x="243" y="261" width="1" height="3" fill="#404040"/><rect x="243" y="267" width="1" height="3" fill="#404040"/><rect x="243" y="273" width="1" height="3" fill="#404040"/><rect x="243" y="279" width="1" height="3" fill="#404040"/><rect x="243" y="285" width="1" height="3" fill="#404040"/><rect x="243" y="291" width="1" height="3" fill="#404040"/><rect x="243" y="297" width="1" height="3" fill="#404040"/><rect x="243" y="303" width="1" height="3" fill="#404040"/><rect x="243" y="309" width="1" height="3" fill="#404040"/><rect x="243" y="315" width="1" height="3" fill="#404040"/><rect x="243" y="321" width="1" height="3" fill="#404040"/><rect x="243" y="327" width="1" height="3" fill="#404040"/><rect x="243" y="333" width="1" height="3" fill="#404040"/><rect x="243" y="339" width="1" height="3" fill="#404040"/><rect x="243" y="345" width="1" height="3" fill="#404040"/><rect x="18" y="55" width="4" height="1" fill="#404040"/><rect x="23" y="55" width="4" height="1" fill="#404040"/><rect x="28" y="55" width="4" height="1" fill="#404040"/><rect x="33" y="55" width="1" height="1" fill="#404040"/><rect x="35" y="55" width="4" height="1" fill="#404040"/><rect x="40" y="55" width="4" height="1" fill="#404040"/><rect x="45" y="55" width="4" height="1" fill="#404040"/><rect x="50" y="55" width="1" height="1" fill="#404040"/><rect x="52" y="55" width="4" height="1" fill="#404040"/><rect x="57" y="55" width="4" height="1" fill="#404040"/><rect x="62" y="55" width="4" height="1" fill="#404040"/><rect x="67" y="55" width="1" height="1" fill="#404040"/><rect x="69" y="55" width="4" height="1" fill="#404040"/><rect x="74" y="55" width="4" height="1" fill="#404040"/><rect x="79" y="55" width="4" height="1" fill="#404040"/><rect x="84" y="55" width="1" height="1" fill="#404040"/><rect x="86" y="55" width="4" height="1" fill="#404040"/><rect x="91" y="55" width="4" height="1" fill="#404040"/><rect x="96" y="55" width="4" height="1" fill="#404040"/><rect x="101" y="55" width="1" height="1" fill="#404040"/><rect x="103" y="55" width="4" height="1" fill="#404040"/><rect x="108" y="55" width="4" height="1" fill="#404040"/><rect x="113" y="55" width="4" height="1" fill="#404040"/><rect x="118" y="55" width="1" height="1" fill="#404040"/><rect x="120" y="55" width="4" height="1" fill="#404040"/><rect x="125" y="55" width="4" height="1" fill="#404040"/><rect x="130" y="55" width="4" height="1" fill="#404040"/><rect x="135" y="55" width="1" height="1" fill="#404040"/><rect x="137" y="55" width="4" height="1" fill="#404040"/><rect x="142" y="55" width="4" height="1" fill="#404040"/><rect x="147" y="55" width="4" height="1" fill="#404040"/><rect x="152" y="55" width="1" height="1" fill="#404040"/><rect x="154" y="55" width="4" height="1" fill="#404040"/><rect x="159" y="55" width="4" height="1" fill="#404040"/><rect x="164" y="55" width="4" height="1" fill="#404040"/><rect x="169" y="55" width="1" height="1" fill="#404040"/><rect x="171" y="55" width="4" height="1" fill="#404040"/><rect x="176" y="55" width="4" height="1" fill="#404040"/><rect x="181" y="55" width="4" height="1" fill="#404040"/><rect x="186" y="55" width="1" height="1" fill="#404040"/><rect x="188" y="55" width="4" height="1" fill="#404040"/><rect x="193" y="55" width="4" height="1" fill="#404040"/><rect x="198" y="55" width="4" height="1" fill="#404040"/><rect x="203" y="55" width="1" height="1" fill="#404040"/><rect x="205" y="55" width="4" height="1" fill="#404040"/><rect x="210" y="55" width="4" height="1" fill="#404040"/><rect x="215" y="55" width="4" height="1" fill="#404040"/><rect x="220" y="55" width="1" height="1" fill="#404040"/><rect x="222" y="55" width="4" height="1" fill="#404040"/><rect x="227" y="55" width="4" height="1" fill="#404040"/><rect x="232" y="55" width="4" height="1" fill="#404040"/><rect x="237" y="55" width="1" height="1" fill="#404040"/><rect x="239" y="55" width="4" height="1" fill="#404040"/><rect x="244" y="55" width="4" height="1" fill="#404040"/><rect x="249" y="55" width="4" height="1" fill="#404040"/><rect x="254" y="55" width="1" height="1" fill="#404040"/><rect x="256" y="55" width="4" height="1" fill="#404040"/><rect x="261" y="55" width="4" height="1" fill="#404040"/><rect x="266" y="55" width="2" height="1" fill="#404040"/><rect x="18" y="96" width="4" height="1" fill="#404040"/><rect x="23" y="96" width="4" height="1" fill="#404040"/><rect x="28" y="96" width="4" height="1" fill="#404040"/><rect x="33" y="96" width="1" height="1" fill="#404040"/><rect x="35" y="96" width="4" height="1" fill="#404040"/><rect x="40" y="96" width="4" height="1" fill="#404040"/><rect x="45" y="96" width="4" height="1" fill="#404040"/><rect x="50" y="96" width="1" height="1" fill="#404040"/><rect x="52" y="96" width="4" height="1" fill="#404040"/><rect x="57" y="96" width="4" height="1" fill="#404040"/><rect x="62" y="96" width="4" height="1" fill="#404040"/><rect x="67" y="96" width="1" height="1" fill="#404040"/><rect x="69" y="96" width="4" height="1" fill="#404040"/><rect x="74" y="96" width="4" height="1" fill="#404040"/><rect x="79" y="96" width="4" height="1" fill="#404040"/><rect x="84" y="96" width="1" height="1" fill="#404040"/><rect x="86" y="96" width="4" height="1" fill="#404040"/><rect x="91" y="96" width="4" height="1" fill="#404040"/><rect x="96" y="96" width="4" height="1" fill="#404040"/><rect x="101" y="96" width="1" height="1" fill="#404040"/><rect x="103" y="96" width="4" height="1" fill="#404040"/><rect x="108" y="96" width="4" height="1" fill="#404040"/><rect x="113" y="96" width="4" height="1" fill="#404040"/><rect x="118" y="96" width="1" height="1" fill="#404040"/><rect x="120" y="96" width="4" height="1" fill="#404040"/><rect x="125" y="96" width="4" height="1" fill="#404040"/><rect x="130" y="96" width="4" height="1" fill="#404040"/><rect x="135" y="96" width="1" height="1" fill="#404040"/><rect x="137" y="96" width="4" height="1" fill="#404040"/><rect x="142" y="96" width="4" height="1" fill="#404040"/><rect x="147" y="96" width="4" height="1" fill="#404040"/><rect x="152" y="96" width="1" height="1" fill="#404040"/><rect x="154" y="96" width="4" height="1" fill="#404040"/><rect x="159" y="96" width="4" height="1" fill="#404040"/><rect x="164" y="96" width="4" height="1" fill="#404040"/><rect x="169" y="96" width="1" height="1" fill="#404040"/><rect x="171" y="96" width="4" height="1" fill="#404040"/><rect x="176" y="96" width="4" height="1" fill="#404040"/><rect x="181" y="96" width="4" height="1" fill="#404040"/><rect x="186" y="96" width="1" height="1" fill="#404040"/><rect x="188" y="96" width="4" height="1" fill="#404040"/><rect x="193" y="96" width="4" height="1" fill="#404040"/><rect x="198" y="96" width="4" height="1" fill="#404040"/><rect x="203" y="96" width="1" height="1" fill="#404040"/><rect x="205" y="96" width="4" height="1" fill="#404040"/><rect x="210" y="96" width="4" height="1" fill="#404040"/><rect x="215" y="96" width="4" height="1" fill="#404040"/><rect x="220" y="96" width="1" height="1" fill="#404040"/><rect x="222" y="96" width="4" height="1" fill="#404040"/><rect x="227" y="96" width="4" height="1" fill="#404040"/><rect x="232" y="96" width="4" height="1" fill="#404040"/><rect x="237" y="96" width="1" height="1" fill="#404040"/><rect x="239" y="96" width="4" height="1" fill="#404040"/><rect x="244" y="96" width="4" height="1" fill="#404040"/><rect x="249" y="96" width="4" height="1" fill="#404040"/><rect x="254" y="96" width="1" height="1" fill="#404040"/><rect x="256" y="96" width="4" height="1" fill="#404040"/><rect x="261" y="96" width="4" height="1" fill="#404040"/><rect x="266" y="96" width="2" height="1" fill="#404040"/><rect x="18" y="138" width="4" height="1" fill="#404040"/><rect x="23" y="138" width="4" height="1" fill="#404040"/><rect x="28" y="138" width="4" height="1" fill="#404040"/><rect x="33" y="138" width="1" height="1" fill="#404040"/><rect x="35" y="138" width="4" height="1" fill="#404040"/><rect x="40" y="138" width="4" height="1" fill="#404040"/><rect x="45" y="138" width="4" height="1" fill="#404040"/><rect x="50" y="138" width="1" height="1" fill="#404040"/><rect x="52" y="138" width="4" height="1" fill="#404040"/><rect x="57" y="138" width="4" height="1" fill="#404040"/><rect x="62" y="138" width="4" height="1" fill="#404040"/><rect x="67" y="138" width="1" height="1" fill="#404040"/><rect x="69" y="138" width="4" height="1" fill="#404040"/><rect x="74" y="138" width="4" height="1" fill="#404040"/><rect x="79" y="138" width="4" height="1" fill="#404040"/><rect x="84" y="138" width="1" height="1" fill="#404040"/><rect x="86" y="138" width="4" height="1" fill="#404040"/><rect x="91" y="138" width="4" height="1" fill="#404040"/><rect x="96" y="138" width="4" height="1" fill="#404040"/><rect x="101" y="138" width="1" height="1" fill="#404040"/><rect x="103" y="138" width="4" height="1" fill="#404040"/><rect x="108" y="138" width="4" height="1" fill="#404040"/><rect x="113" y="138" width="4" height="1" fill="#404040"/><rect x="118" y="138" width="1" height="1" fill="#404040"/><rect x="120" y="138" width="4" height="1" fill="#404040"/><rect x="125" y="138" width="4" height="1" fill="#404040"/><rect x="130" y="138" width="4" height="1" fill="#404040"/><rect x="135" y="138" width="1" height="1" fill="#404040"/><rect x="137" y="138" width="4" height="1" fill="#404040"/><rect x="142" y="138" width="4" height="1" fill="#404040"/><rect x="147" y="138" width="4" height="1" fill="#404040"/><rect x="152" y="138" width="1" height="1" fill="#404040"/><rect x="154" y="138" width="4" height="1" fill="#404040"/><rect x="159" y="138" width="4" height="1" fill="#404040"/><rect x="164" y="138" width="4" height="1" fill="#404040"/><rect x="169" y="138" width="1" height="1" fill="#404040"/><rect x="171" y="138" width="4" height="1" fill="#404040"/><rect x="176" y="138" width="4" height="1" fill="#404040"/><rect x="181" y="138" width="4" height="1" fill="#404040"/><rect x="186" y="138" width="1" height="1" fill="#404040"/><rect x="188" y="138" width="4" height="1" fill="#404040"/><rect x="193" y="138" width="4" height="1" fill="#404040"/><rect x="198" y="138" width="4" height="1" fill="#404040"/><rect x="203" y="138" width="1" height="1" fill="#404040"/><rect x="205" y="138" width="4" height="1" fill="#404040"/><rect x="210" y="138" width="4" height="1" fill="#404040"/><rect x="215" y="138" width="4" height="1" fill="#404040"/><rect x="220" y="138" width="1" height="1" fill="#404040"/><rect x="222" y="138" width="4" height="1" fill="#404040"/><rect x="227" y="138" width="4" height="1" fill="#404040"/><rect x="232" y="138" width="4" height="1" fill="#404040"/><rect x="237" y="138" width="1" height="1" fill="#404040"/><rect x="239" y="138" width="4" height="1" fill="#404040"/><rect x="244" y="138" width="4" height="1" fill="#404040"/><rect x="249" y="138" width="4" height="1" fill="#404040"/><rect x="254" y="138" width="1" height="1" fill="#404040"/><rect x="256" y="138" width="4" height="1" fill="#404040"/><rect x="261" y="138" width="4" height="1" fill="#404040"/><rect x="266" y="138" width="2" height="1" fill="#404040"/><rect x="18" y="180" width="4" height="2" fill="#404040"/><rect x="23" y="180" width="4" height="2" fill="#404040"/><rect x="28" y="180" width="4" height="2" fill="#404040"/><rect x="33" y="180" width="1" height="2" fill="#404040"/><rect x="35" y="180" width="4" height="2" fill="#404040"/><rect x="40" y="180" width="4" height="2" fill="#404040"/><rect x="45" y="180" width="4" height="2" fill="#404040"/><rect x="50" y="180" width="1" height="2" fill="#404040"/><rect x="52" y="180" width="4" height="2" fill="#404040"/><rect x="57" y="180" width="4" height="2" fill="#404040"/><rect x="62" y="180" width="4" height="2" fill="#404040"/><rect x="67" y="180" width="1" height="2" fill="#404040"/><rect x="69" y="180" width="4" height="2" fill="#404040"/><rect x="74" y="180" width="4" height="2" fill="#404040"/><rect x="79" y="180" width="4" height="2" fill="#404040"/><rect x="84" y="180" width="1" height="2" fill="#404040"/><rect x="86" y="180" width="4" height="2" fill="#404040"/><rect x="91" y="180" width="4" height="2" fill="#404040"/><rect x="96" y="180" width="4" height="2" fill="#404040"/><rect x="101" y="180" width="1" height="2" fill="#404040"/><rect x="103" y="180" width="4" height="2" fill="#404040"/><rect x="108" y="180" width="4" height="2" fill="#404040"/><rect x="113" y="180" width="4" height="2" fill="#404040"/><rect x="118" y="180" width="1" height="2" fill="#404040"/><rect x="120" y="180" width="4" height="2" fill="#404040"/><rect x="125" y="180" width="4" height="2" fill="#404040"/><rect x="130" y="180" width="4" height="2" fill="#404040"/><rect x="135" y="180" width="1" height="2" fill="#404040"/><rect x="137" y="180" width="4" height="2" fill="#404040"/><rect x="142" y="180" width="4" height="2" fill="#404040"/><rect x="147" y="180" width="4" height="2" fill="#404040"/><rect x="152" y="180" width="1" height="2" fill="#404040"/><rect x="154" y="180" width="4" height="2" fill="#404040"/><rect x="159" y="180" width="4" height="2" fill="#404040"/><rect x="164" y="180" width="4" height="2" fill="#404040"/><rect x="169" y="180" width="1" height="2" fill="#404040"/><rect x="171" y="180" width="4" height="2" fill="#404040"/><rect x="176" y="180" width="4" height="2" fill="#404040"/><rect x="181" y="180" width="4" height="2" fill="#404040"/><rect x="186" y="180" width="1" height="2" fill="#404040"/><rect x="188" y="180" width="4" height="2" fill="#404040"/><rect x="193" y="180" width="4" height="2" fill="#404040"/><rect x="198" y="180" width="4" height="2" fill="#404040"/><rect x="203" y="180" width="1" height="2" fill="#404040"/><rect x="205" y="180" width="4" height="2" fill="#404040"/><rect x="210" y="180" width="4" height="2" fill="#404040"/><rect x="215" y="180" width="4" height="2" fill="#404040"/><rect x="220" y="180" width="1" height="2" fill="#404040"/><rect x="222" y="180" width="4" height="2" fill="#404040"/><rect x="227" y="180" width="4" height="2" fill="#404040"/><rect x="232" y="180" width="4" height="2" fill="#404040"/><rect x="237" y="180" width="1" height="2" fill="#404040"/><rect x="239" y="180" width="4" height="2" fill="#404040"/><rect x="244" y="180" width="4" height="2" fill="#404040"/><rect x="249" y="180" width="4" height="2" fill="#404040"/><rect x="254" y="180" width="1" height="2" fill="#404040"/><rect x="256" y="180" width="4" height="2" fill="#404040"/><rect x="261" y="180" width="4" height="2" fill="#404040"/><rect x="266" y="180" width="2" height="2" fill="#404040"/><rect x="18" y="222" width="4" height="1" fill="#404040"/><rect x="23" y="222" width="4" height="1" fill="#404040"/><rect x="28" y="222" width="4" height="1" fill="#404040"/><rect x="33" y="222" width="1" height="1" fill="#404040"/><rect x="35" y="222" width="4" height="1" fill="#404040"/><rect x="40" y="222" width="4" height="1" fill="#404040"/><rect x="45" y="222" width="4" height="1" fill="#404040"/><rect x="50" y="222" width="1" height="1" fill="#404040"/><rect x="52" y="222" width="4" height="1" fill="#404040"/><rect x="57" y="222" width="4" height="1" fill="#404040"/><rect x="62" y="222" width="4" height="1" fill="#404040"/><rect x="67" y="222" width="1" height="1" fill="#404040"/><rect x="69" y="222" width="4" height="1" fill="#404040"/><rect x="74" y="222" width="4" height="1" fill="#404040"/><rect x="79" y="222" width="4" height="1" fill="#404040"/><rect x="84" y="222" width="1" height="1" fill="#404040"/><rect x="86" y="222" width="4" height="1" fill="#404040"/><rect x="91" y="222" width="4" height="1" fill="#404040"/><rect x="96" y="222" width="4" height="1" fill="#404040"/><rect x="101" y="222" width="1" height="1" fill="#404040"/><rect x="103" y="222" width="4" height="1" fill="#404040"/><rect x="108" y="222" width="4" height="1" fill="#404040"/><rect x="113" y="222" width="4" height="1" fill="#404040"/><rect x="118" y="222" width="1" height="1" fill="#404040"/><rect x="120" y="222" width="4" height="1" fill="#404040"/><rect x="125" y="222" width="4" height="1" fill="#404040"/><rect x="130" y="222" width="4" height="1" fill="#404040"/><rect x="135" y="222" width="1" height="1" fill="#404040"/><rect x="137" y="222" width="4" height="1" fill="#404040"/><rect x="142" y="222" width="4" height="1" fill="#404040"/><rect x="147" y="222" width="4" height="1" fill="#404040"/><rect x="152" y="222" width="1" height="1" fill="#404040"/><rect x="154" y="222" width="4" height="1" fill="#404040"/><rect x="159" y="222" width="4" height="1" fill="#404040"/><rect x="164" y="222" width="4" height="1" fill="#404040"/><rect x="169" y="222" width="1" height="1" fill="#404040"/><rect x="171" y="222" width="4" height="1" fill="#404040"/><rect x="176" y="222" width="4" height="1" fill="#404040"/><rect x="181" y="222" width="4" height="1" fill="#404040"/><rect x="186" y="222" width="1" height="1" fill="#404040"/><rect x="188" y="222" width="4" height="1" fill="#404040"/><rect x="193" y="222" width="4" height="1" fill="#404040"/><rect x="198" y="222" width="4" height="1" fill="#404040"/><rect x="203" y="222" width="1" height="1" fill="#404040"/><rect x="205" y="222" width="4" height="1" fill="#404040"/><rect x="210" y="222" width="4" height="1" fill="#404040"/><rect x="215" y="222" width="4" height="1" fill="#404040"/><rect x="220" y="222" width="1" height="1" fill="#404040"/><rect x="222" y="222" width="4" height="1" fill="#404040"/><rect x="227" y="222" width="4" height="1" fill="#404040"/><rect x="232" y="222" width="4" height="1" fill="#404040"/><rect x="237" y="222" width="1" height="1" fill="#404040"/><rect x="239" y="222" width="4" height="1" fill="#404040"/><rect x="244" y="222" width="4" height="1" fill="#404040"/><rect x="249" y="222" width="4" height="1" fill="#404040"/><rect x="254" y="222" width="1" height="1" fill="#404040"/><rect x="256" y="222" width="4" height="1" fill="#404040"/><rect x="261" y="222" width="4" height="1" fill="#404040"/><rect x="266" y="222" width="2" height="1" fill="#404040"/><rect x="18" y="264" width="4" height="1" fill="#404040"/><rect x="23" y="264" width="4" height="1" fill="#404040"/><rect x="28" y="264" width="4" height="1" fill="#404040"/><rect x="33" y="264" width="1" height="1" fill="#404040"/><rect x="35" y="264" width="4" height="1" fill="#404040"/><rect x="40" y="264" width="4" height="1" fill="#404040"/><rect x="45" y="264" width="4" height="1" fill="#404040"/><rect x="50" y="264" width="1" height="1" fill="#404040"/><rect x="52" y="264" width="4" height="1" fill="#404040"/><rect x="57" y="264" width="4" height="1" fill="#404040"/><rect x="62" y="264" width="4" height="1" fill="#404040"/><rect x="67" y="264" width="1" height="1" fill="#404040"/><rect x="69" y="264" width="4" height="1" fill="#404040"/><rect x="74" y="264" width="4" height="1" fill="#404040"/><rect x="79" y="264" width="4" height="1" fill="#404040"/><rect x="84" y="264" width="1" height="1" fill="#404040"/><rect x="86" y="264" width="4" height="1" fill="#404040"/><rect x="91" y="264" width="4" height="1" fill="#404040"/><rect x="96" y="264" width="4" height="1" fill="#404040"/><rect x="101" y="264" width="1" height="1" fill="#404040"/><rect x="103" y="264" width="4" height="1" fill="#404040"/><rect x="108" y="264" width="4" height="1" fill="#404040"/><rect x="113" y="264" width="4" height="1" fill="#404040"/><rect x="118" y="264" width="1" height="1" fill="#404040"/><rect x="120" y="264" width="4" height="1" fill="#404040"/><rect x="125" y="264" width="4" height="1" fill="#404040"/><rect x="130" y="264" width="4" height="1" fill="#404040"/><rect x="135" y="264" width="1" height="1" fill="#404040"/><rect x="137" y="264" width="4" height="1" fill="#404040"/><rect x="142" y="264" width="4" height="1" fill="#404040"/><rect x="147" y="264" width="4" height="1" fill="#404040"/><rect x="152" y="264" width="1" height="1" fill="#404040"/><rect x="154" y="264" width="4" height="1" fill="#404040"/><rect x="159" y="264" width="4" height="1" fill="#404040"/><rect x="164" y="264" width="4" height="1" fill="#404040"/><rect x="169" y="264" width="1" height="1" fill="#404040"/><rect x="171" y="264" width="4" height="1" fill="#404040"/><rect x="176" y="264" width="4" height="1" fill="#404040"/><rect x="181" y="264" width="4" height="1" fill="#404040"/><rect x="186" y="264" width="1" height="1" fill="#404040"/><rect x="188" y="264" width="4" height="1" fill="#404040"/><rect x="193" y="264" width="4" height="1" fill="#404040"/><rect x="198" y="264" width="4" height="1" fill="#404040"/><rect x="203" y="264" width="1" height="1" fill="#404040"/><rect x="205" y="264" width="4" height="1" fill="#404040"/><rect x="210" y="264" width="4" height="1" fill="#404040"/><rect x="215" y="264" width="4" height="1" fill="#404040"/><rect x="220" y="264" width="1" height="1" fill="#404040"/><rect x="222" y="264" width="4" height="1" fill="#404040"/><rect x="227" y="264" width="4" height="1" fill="#404040"/><rect x="232" y="264" width="4" height="1" fill="#404040"/><rect x="237" y="264" width="1" height="1" fill="#404040"/><rect x="239" y="264" width="4" height="1" fill="#404040"/><rect x="244" y="264" width="4" height="1" fill="#404040"/><rect x="249" y="264" width="4" height="1" fill="#404040"/><rect x="254" y="264" width="1" height="1" fill="#404040"/><rect x="256" y="264" width="4" height="1" fill="#404040"/><rect x="261" y="264" width="4" height="1" fill="#404040"/><rect x="266" y="264" width="2" height="1" fill="#404040"/><rect x="18" y="305" width="4" height="1" fill="#404040"/><rect x="23" y="305" width="4" height="1" fill="#404040"/><rect x="28" y="305" width="4" height="1" fill="#404040"/><rect x="33" y="305" width="1" height="1" fill="#404040"/><rect x="35" y="305" width="4" height="1" fill="#404040"/><rect x="40" y="305" width="4" height="1" fill="#404040"/><rect x="45" y="305" width="4" height="1" fill="#404040"/><rect x="50" y="305" width="1" height="1" fill="#404040"/><rect x="52" y="305" width="4" height="1" fill="#404040"/><rect x="57" y="305" width="4" height="1" fill="#404040"/><rect x="62" y="305" width="4" height="1" fill="#404040"/><rect x="67" y="305" width="1" height="1" fill="#404040"/><rect x="69" y="305" width="4" height="1" fill="#404040"/><rect x="74" y="305" width="4" height="1" fill="#404040"/><rect x="79" y="305" width="4" height="1" fill="#404040"/><rect x="84" y="305" width="1" height="1" fill="#404040"/><rect x="86" y="305" width="4" height="1" fill="#404040"/><rect x="91" y="305" width="4" height="1" fill="#404040"/><rect x="96" y="305" width="4" height="1" fill="#404040"/><rect x="101" y="305" width="1" height="1" fill="#404040"/><rect x="103" y="305" width="4" height="1" fill="#404040"/><rect x="108" y="305" width="4" height="1" fill="#404040"/><rect x="113" y="305" width="4" height="1" fill="#404040"/><rect x="118" y="305" width="1" height="1" fill="#404040"/><rect x="120" y="305" width="4" height="1" fill="#404040"/><rect x="125" y="305" width="4" height="1" fill="#404040"/><rect x="130" y="305" width="4" height="1" fill="#404040"/><rect x="135" y="305" width="1" height="1" fill="#404040"/><rect x="137" y="305" width="4" height="1" fill="#404040"/><rect x="142" y="305" width="4" height="1" fill="#404040"/><rect x="147" y="305" width="4" height="1" fill="#404040"/><rect x="152" y="305" width="1" height="1" fill="#404040"/><rect x="154" y="305" width="4" height="1" fill="#404040"/><rect x="159" y="305" width="4" height="1" fill="#404040"/><rect x="164" y="305" width="4" height="1" fill="#404040"/><rect x="169" y="305" width="1" height="1" fill="#404040"/><rect x="171" y="305" width="4" height="1" fill="#404040"/><rect x="176" y="305" width="4" height="1" fill="#404040"/><rect x="181" y="305" width="4" height="1" fill="#404040"/><rect x="186" y="305" width="1" height="1" fill="#404040"/><rect x="188" y="305" width="4" height="1" fill="#404040"/><rect x="193" y="305" width="4" height="1" fill="#404040"/><rect x="198" y="305" width="4" height="1" fill="#404040"/><rect x="203" y="305" width="1" height="1" fill="#404040"/><rect x="205" y="305" width="4" height="1" fill="#404040"/><rect x="210" y="305" width="4" height="1" fill="#404040"/><rect x="215" y="305" width="4" height="1" fill="#404040"/><rect x="220" y="305" width="1" height="1" fill="#404040"/><rect x="222" y="305" width="4" height="1" fill="#404040"/><rect x="227" y="305" width="4" height="1" fill="#404040"/><rect x="232" y="305" width="4" height="1" fill="#404040"/><rect x="237" y="305" width="1" height="1" fill="#404040"/><rect x="239" y="305" width="4" height="1" fill="#404040"/><rect x="244" y="305" width="4" height="1" fill="#404040"/><rect x="249" y="305" width="4" height="1" fill="#404040"/><rect x="254" y="305" width="1" height="1" fill="#404040"/><rect x="256" y="305" width="4" height="1" fill="#404040"/><rect x="261" y="305" width="4" height="1" fill="#404040"/><rect x="266" y="305" width="2" height="1" fill="#404040"/><rect x="15" y="371" width="1" height="1" fill="#c4c4c4"/><rect x="17" y="371" width="1" height="1" fill="#c4c4c4"/><rect x="21" y="371" width="1" height="1" fill="#c4c4c4"/><rect x="29" y="371" width="1" height="1" fill="#c4c4c4"/><rect x="31" y="371" width="1" height="1" fill="#c4c4c4"/><rect x="33" y="371" width="1" height="1" fill="#c4c4c4"/><rect x="35" y="371" width="1" height="1" fill="#c4c4c4"/><rect x="37" y="371" width="1" height="1" fill="#c4c4c4"/><rect x="39" y="371" width="1" height="1" fill="#c4c4c4"/><rect x="41" y="371" width="1" height="1" fill="#c4c4c4"/><rect x="43" y="371" width="1" height="1" fill="#c4c4c4"/><rect x="45" y="371" width="1" height="1" fill="#c4c4c4"/><rect x="47" y="371" width="1" height="1" fill="#c4c4c4"/><rect x="49" y="371" width="1" height="1" fill="#c4c4c4"/><rect x="51" y="371" width="1" height="1" fill="#c4c4c4"/><rect x="53" y="371" width="1" height="1" fill="#c4c4c4"/><rect x="55" y="371" width="1" height="1" fill="#c4c4c4"/></g><polyline points="18.0,251.6 19.0,255.7 20.0,259.6 21.0,263.3 22.0,266.7 23.0,269.9 24.0,272.9 25.0,275.6 26.0,278.1 27.0,280.3 28.0,282.3 29.0,284.0 30.0,285.4 31.0,286.5 32.0,287.4 33.0,287.9 34.0,288.2 35.0,288.2 36.0,287.9 37.0,287.4 38.0,286.5 39.0,285.4 40.0,284.0 41.0,282.3 42.0,280.3 43.0,278.1 44.0,275.6 45.0,272.9 46.0,269.9 47.0,266.7 48.0,263.3 49.0,259.6 50.0,255.7 51.0,251.6 52.0,247.4 53.0,242.9 54.0,238.3 55.0,233.5 56.0,228.6 57.0,223.5 58.0,218.3 59.0,213.0 60.0,207.6 61.0,202.2 62.0,196.6 63.0,191.0 64.0,185.4 65.0,179.7 66.0,174.1 67.0,168.4 68.0,162.8 69.0,157.2 70.0,151.6 71.0,146.1 72.0,140.7 73.0,135.3 74.0,130.1 75.0,124.9 76.0,119.9 77.0,115.1 78.0,110.4 79.0,105.8 80.0,101.5 81.0,97.3 82.0,93.3 83.0,89.5 84.0,86.0 85.0,82.6 86.0,79.6 87.0,76.7 88.0,74.1 89.0,71.7 90.0,69.7 91.0,67.8 92.0,66.3 93.0,65.0 94.0,64.0 95.0,63.3 96.0,62.9 97.0,62.8 98.0,62.9 99.0,63.3 100.0,64.0 101.0,65.0 102.0,66.3 103.0,67.8 104.0,69.7 105.0,71.7 106.0,74.1 107.0,76.7 108.0,79.6 109.0,82.6 110.0,86.0 111.0,89.5 112.0,93.3 113.0,97.3 114.0,101.5 115.0,105.8 116.0,110.4 117.0,115.1 118.0,119.9 119.0,124.9 120.0,130.1 121.0,135.3 122.0,140.7 123.0,146.1 124.0,151.6 125.0,157.2 126.0,162.8 127.0,168.4 128.0,174.1 129.0,179.7 130.0,185.4 131.0,191.0 132.0,196.6 133.0,202.2 134.0,207.6 135.0,213.0 136.0,218.3 137.0,223.5 138.0,228.6 139.0,233.5 140.0,238.3 141.0,242.9 142.0,247.4 143.0,251.6 144.0,255.7 145.0,259.6 146.0,263.3 147.0,266.7 148.0,269.9 149.0,272.9 150.0,275.6 151.0,278.1 152.0,280.3 153.0,282.3 154.0,284.0 155.0,285.4 156.0,286.5 157.0,287.4 158.0,287.9 159.0,288.2 160.0,288.2 161.0,287.9 162.0,287.4 163.0,286.5 164.0,285.4 165.0,284.0 166.0,282.3 167.0,280.3 168.0,278.1 169.0,275.6 170.0,272.9 171.0,269.9 172.0,266.7 173.0,263.3 174.0,259.6 175.0,255.7 176.0,251.6 177.0,247.4 178.0,242.9 179.0,238.3 180.0,233.5 181.0,228.6 182.0,223.5 183.0,218.3 184.0,213.0 185.0,207.6 186.0,202.2 187.0,196.6 188.0,191.0 189.0,185.4 190.0,179.7 191.0,174.1 192.0,168.4 193.0,162.8 194.0,157.2 195.0,151.6 196.0,146.1 197.0,140.7 198.0,135.3 199.0,130.1 200.0,124.9 201.0,119.9 202.0,115.1 203.0,110.4 204.0,105.8 205.0,101.5 206.0,97.3 207.0,93.3 208.0,89.5 209.0,86.0 210.0,82.6 211.0,79.6 212.0,76.7 213.0,74.1 214.0,71.7 215.0,69.7 216.0,67.8 217.0,66.3 218.0,65.0 219.0,64.0 220.0,63.3 221.0,62.9 222.0,62.8 223.0,62.9 224.0,63.3 225.0,64.0 226.0,65.0 227.0,66.3 228.0,67.8 229.0,69.7 230.0,71.7 231.0,74.1 232.0,76.7 233.0,79.6 234.0,82.6 235.0,86.0 236.0,89.5 237.0,93.3 238.0,97.3 239.0,101.5 240.0,105.8 241.0,110.4 242.0,115.1 243.0,119.9 244.0,124.9 245.0,130.1 246.0,135.3 247.0,140.7 248.0,146.1 249.0,151.6 250.0,157.2 251.0,162.8 252.0,168.4 253.0,174.1 254.0,179.7 255.0,185.4 256.0,191.0 257.0,196.6 258.0,202.2 259.0,207.6 260.0,213.0 261.0,218.3 262.0,223.5 263.0,228.6 264.0,233.5 265.0,238.3 266.0,242.9 267.0,247.4 268.0,251.6" fill="none" stroke="#000" stroke-width="1.1" stroke-linejoin="round" shape-rendering="crispEdges"/><polyline transform="translate(0.3,0.3)" points="18.0,251.6 19.0,255.7 20.0,259.6 21.0,263.3 22.0,266.7 23.0,269.9 24.0,272.9 25.0,275.6 26.0,278.1 27.0,280.3 28.0,282.3 29.0,284.0 30.0,285.4 31.0,286.5 32.0,287.4 33.0,287.9 34.0,288.2 35.0,288.2 36.0,287.9 37.0,287.4 38.0,286.5 39.0,285.4 40.0,284.0 41.0,282.3 42.0,280.3 43.0,278.1 44.0,275.6 45.0,272.9 46.0,269.9 47.0,266.7 48.0,263.3 49.0,259.6 50.0,255.7 51.0,251.6 52.0,247.4 53.0,242.9 54.0,238.3 55.0,233.5 56.0,228.6 57.0,223.5 58.0,218.3 59.0,213.0 60.0,207.6 61.0,202.2 62.0,196.6 63.0,191.0 64.0,185.4 65.0,179.7 66.0,174.1 67.0,168.4 68.0,162.8 69.0,157.2 70.0,151.6 71.0,146.1 72.0,140.7 73.0,135.3 74.0,130.1 75.0,124.9 76.0,119.9 77.0,115.1 78.0,110.4 79.0,105.8 80.0,101.5 81.0,97.3 82.0,93.3 83.0,89.5 84.0,86.0 85.0,82.6 86.0,79.6 87.0,76.7 88.0,74.1 89.0,71.7 90.0,69.7 91.0,67.8 92.0,66.3 93.0,65.0 94.0,64.0 95.0,63.3 96.0,62.9 97.0,62.8 98.0,62.9 99.0,63.3 100.0,64.0 101.0,65.0 102.0,66.3 103.0,67.8 104.0,69.7 105.0,71.7 106.0,74.1 107.0,76.7 108.0,79.6 109.0,82.6 110.0,86.0 111.0,89.5 112.0,93.3 113.0,97.3 114.0,101.5 115.0,105.8 116.0,110.4 117.0,115.1 118.0,119.9 119.0,124.9 120.0,130.1 121.0,135.3 122.0,140.7 123.0,146.1 124.0,151.6 125.0,157.2 126.0,162.8 127.0,168.4 128.0,174.1 129.0,179.7 130.0,185.4 131.0,191.0 132.0,196.6 133.0,202.2 134.0,207.6 135.0,213.0 136.0,218.3 137.0,223.5 138.0,228.6 139.0,233.5 140.0,238.3 141.0,242.9 142.0,247.4 143.0,251.6 144.0,255.7 145.0,259.6 146.0,263.3 147.0,266.7 148.0,269.9 149.0,272.9 150.0,275.6 151.0,278.1 152.0,280.3 153.0,282.3 154.0,284.0 155.0,285.4 156.0,286.5 157.0,287.4 158.0,287.9 159.0,288.2 160.0,288.2 161.0,287.9 162.0,287.4 163.0,286.5 164.0,285.4 165.0,284.0 166.0,282.3 167.0,280.3 168.0,278.1 169.0,275.6 170.0,272.9 171.0,269.9 172.0,266.7 173.0,263.3 174.0,259.6 175.0,255.7 176.0,251.6 177.0,247.4 178.0,242.9 179.0,238.3 180.0,233.5 181.0,228.6 182.0,223.5 183.0,218.3 184.0,213.0 185.0,207.6 186.0,202.2 187.0,196.6 188.0,191.0 189.0,185.4 190.0,179.7 191.0,174.1 192.0,168.4 193.0,162.8 194.0,157.2 195.0,151.6 196.0,146.1 197.0,140.7 198.0,135.3 199.0,130.1 200.0,124.9 201.0,119.9 202.0,115.1 203.0,110.4 204.0,105.8 205.0,101.5 206.0,97.3 207.0,93.3 208.0,89.5 209.0,86.0 210.0,82.6 211.0,79.6 212.0,76.7 213.0,74.1 214.0,71.7 215.0,69.7 216.0,67.8 217.0,66.3 218.0,65.0 219.0,64.0 220.0,63.3 221.0,62.9 222.0,62.8 223.0,62.9 224.0,63.3 225.0,64.0 226.0,65.0 227.0,66.3 228.0,67.8 229.0,69.7 230.0,71.7 231.0,74.1 232.0,76.7 233.0,79.6 234.0,82.6 235.0,86.0 236.0,89.5 237.0,93.3 238.0,97.3 239.0,101.5 240.0,105.8 241.0,110.4 242.0,115.1 243.0,119.9 244.0,124.9 245.0,130.1 246.0,135.3 247.0,140.7 248.0,146.1 249.0,151.6 250.0,157.2 251.0,162.8 252.0,168.4 253.0,174.1 254.0,179.7 255.0,185.4 256.0,191.0 257.0,196.6 258.0,202.2 259.0,207.6 260.0,213.0 261.0,218.3 262.0,223.5 263.0,228.6 264.0,233.5 265.0,238.3 266.0,242.9 267.0,247.4 268.0,251.6" fill="none" stroke="#000" stroke-width="1.1" stroke-linejoin="round" shape-rendering="crispEdges"/><polyline points="18.0,161.1 19.0,166.0 20.0,170.9 21.0,176.0 22.0,181.1 23.0,186.2 24.0,191.4 25.0,196.5 26.0,201.7 27.0,206.8 28.0,212.0 29.0,217.0 30.0,222.1 31.0,227.0 32.0,231.9 33.0,236.6 34.0,241.3 35.0,245.9 36.0,250.3 37.0,254.6 38.0,258.7 39.0,262.7 40.0,266.5 41.0,270.2 42.0,273.6 43.0,276.8 44.0,279.9 45.0,282.7 46.0,285.3 47.0,287.7 48.0,289.8 49.0,291.7 50.0,293.4 51.0,294.8 52.0,295.9 53.0,296.8 54.0,297.5 55.0,297.9 56.0,298.0 57.0,297.9 58.0,297.5 59.0,296.8 60.0,295.9 61.0,294.8 62.0,293.4 63.0,291.7 64.0,289.8 65.0,287.7 66.0,285.3 67.0,282.7 68.0,279.9 69.0,276.8 70.0,273.6 71.0,270.2 72.0,266.5 73.0,262.7 74.0,258.7 75.0,254.6 76.0,250.3 77.0,245.9 78.0,241.3 79.0,236.6 80.0,231.9 81.0,227.0 82.0,222.1 83.0,217.0 84.0,212.0 85.0,206.8 86.0,201.7 87.0,196.5 88.0,191.4 89.0,186.2 90.0,181.1 91.0,176.0 92.0,170.9 93.0,166.0 94.0,161.1 95.0,156.2 96.0,151.5 97.0,146.9 98.0,142.4 99.0,138.0 100.0,133.8 101.0,129.8 102.0,125.9 103.0,122.1 104.0,118.6 105.0,115.3 106.0,112.1 107.0,109.2 108.0,106.5 109.0,104.0 110.0,101.7 111.0,99.7 112.0,97.9 113.0,96.4 114.0,95.1 115.0,94.1 116.0,93.3 117.0,92.8 118.0,92.5 119.0,92.5 120.0,92.8 121.0,93.3 122.0,94.1 123.0,95.1 124.0,96.4 125.0,97.9 126.0,99.7 127.0,101.7 128.0,104.0 129.0,106.5 130.0,109.2 131.0,112.1 132.0,115.3 133.0,118.6 134.0,122.1 135.0,125.9 136.0,129.8 137.0,133.8 138.0,138.0 139.0,142.4 140.0,146.9 141.0,151.5 142.0,156.2 143.0,161.1 144.0,166.0 145.0,170.9 146.0,176.0 147.0,181.1 148.0,186.2 149.0,191.4 150.0,196.5 151.0,201.7 152.0,206.8 153.0,212.0 154.0,217.0 155.0,222.1 156.0,227.0 157.0,231.9 158.0,236.6 159.0,241.3 160.0,245.9 161.0,250.3 162.0,254.6 163.0,258.7 164.0,262.7 165.0,266.5 166.0,270.2 167.0,273.6 168.0,276.8 169.0,279.9 170.0,282.7 171.0,285.3 172.0,287.7 173.0,289.8 174.0,291.7 175.0,293.4 176.0,294.8 177.0,295.9 178.0,296.8 179.0,297.5 180.0,297.9 181.0,298.0 182.0,297.9 183.0,297.5 184.0,296.8 185.0,295.9 186.0,294.8 187.0,293.4 188.0,291.7 189.0,289.8 190.0,287.7 191.0,285.3 192.0,282.7 193.0,279.9 194.0,276.8 195.0,273.6 196.0,270.2 197.0,266.5 198.0,262.7 199.0,258.7 200.0,254.6 201.0,250.3 202.0,245.9 203.0,241.3 204.0,236.6 205.0,231.9 206.0,227.0 207.0,222.1 208.0,217.0 209.0,212.0 210.0,206.8 211.0,201.7 212.0,196.5 213.0,191.4 214.0,186.2 215.0,181.1 216.0,176.0 217.0,170.9 218.0,166.0 219.0,161.1 220.0,156.2 221.0,151.5 222.0,146.9 223.0,142.4 224.0,138.0 225.0,133.8 226.0,129.8 227.0,125.9 228.0,122.1 229.0,118.6 230.0,115.3 231.0,112.1 232.0,109.2 233.0,106.5 234.0,104.0 235.0,101.7 236.0,99.7 237.0,97.9 238.0,96.4 239.0,95.1 240.0,94.1 241.0,93.3 242.0,92.8 243.0,92.5 244.0,92.5 245.0,92.8 246.0,93.3 247.0,94.1 248.0,95.1 249.0,96.4 250.0,97.9 251.0,99.7 252.0,101.7 253.0,104.0 254.0,106.5 255.0,109.2 256.0,112.1 257.0,115.3 258.0,118.6 259.0,122.1 260.0,125.9 261.0,129.8 262.0,133.8 263.0,138.0 264.0,142.4 265.0,146.9 266.0,151.5 267.0,156.2 268.0,161.1" fill="none" stroke="#000" stroke-width="1.1" stroke-linejoin="round" shape-rendering="crispEdges"/><polyline transform="translate(0.3,0.3)" points="18.0,161.1 19.0,166.0 20.0,170.9 21.0,176.0 22.0,181.1 23.0,186.2 24.0,191.4 25.0,196.5 26.0,201.7 27.0,206.8 28.0,212.0 29.0,217.0 30.0,222.1 31.0,227.0 32.0,231.9 33.0,236.6 34.0,241.3 35.0,245.9 36.0,250.3 37.0,254.6 38.0,258.7 39.0,262.7 40.0,266.5 41.0,270.2 42.0,273.6 43.0,276.8 44.0,279.9 45.0,282.7 46.0,285.3 47.0,287.7 48.0,289.8 49.0,291.7 50.0,293.4 51.0,294.8 52.0,295.9 53.0,296.8 54.0,297.5 55.0,297.9 56.0,298.0 57.0,297.9 58.0,297.5 59.0,296.8 60.0,295.9 61.0,294.8 62.0,293.4 63.0,291.7 64.0,289.8 65.0,287.7 66.0,285.3 67.0,282.7 68.0,279.9 69.0,276.8 70.0,273.6 71.0,270.2 72.0,266.5 73.0,262.7 74.0,258.7 75.0,254.6 76.0,250.3 77.0,245.9 78.0,241.3 79.0,236.6 80.0,231.9 81.0,227.0 82.0,222.1 83.0,217.0 84.0,212.0 85.0,206.8 86.0,201.7 87.0,196.5 88.0,191.4 89.0,186.2 90.0,181.1 91.0,176.0 92.0,170.9 93.0,166.0 94.0,161.1 95.0,156.2 96.0,151.5 97.0,146.9 98.0,142.4 99.0,138.0 100.0,133.8 101.0,129.8 102.0,125.9 103.0,122.1 104.0,118.6 105.0,115.3 106.0,112.1 107.0,109.2 108.0,106.5 109.0,104.0 110.0,101.7 111.0,99.7 112.0,97.9 113.0,96.4 114.0,95.1 115.0,94.1 116.0,93.3 117.0,92.8 118.0,92.5 119.0,92.5 120.0,92.8 121.0,93.3 122.0,94.1 123.0,95.1 124.0,96.4 125.0,97.9 126.0,99.7 127.0,101.7 128.0,104.0 129.0,106.5 130.0,109.2 131.0,112.1 132.0,115.3 133.0,118.6 134.0,122.1 135.0,125.9 136.0,129.8 137.0,133.8 138.0,138.0 139.0,142.4 140.0,146.9 141.0,151.5 142.0,156.2 143.0,161.1 144.0,166.0 145.0,170.9 146.0,176.0 147.0,181.1 148.0,186.2 149.0,191.4 150.0,196.5 151.0,201.7 152.0,206.8 153.0,212.0 154.0,217.0 155.0,222.1 156.0,227.0 157.0,231.9 158.0,236.6 159.0,241.3 160.0,245.9 161.0,250.3 162.0,254.6 163.0,258.7 164.0,262.7 165.0,266.5 166.0,270.2 167.0,273.6 168.0,276.8 169.0,279.9 170.0,282.7 171.0,285.3 172.0,287.7 173.0,289.8 174.0,291.7 175.0,293.4 176.0,294.8 177.0,295.9 178.0,296.8 179.0,297.5 180.0,297.9 181.0,298.0 182.0,297.9 183.0,297.5 184.0,296.8 185.0,295.9 186.0,294.8 187.0,293.4 188.0,291.7 189.0,289.8 190.0,287.7 191.0,285.3 192.0,282.7 193.0,279.9 194.0,276.8 195.0,273.6 196.0,270.2 197.0,266.5 198.0,262.7 199.0,258.7 200.0,254.6 201.0,250.3 202.0,245.9 203.0,241.3 204.0,236.6 205.0,231.9 206.0,227.0 207.0,222.1 208.0,217.0 209.0,212.0 210.0,206.8 211.0,201.7 212.0,196.5 213.0,191.4 214.0,186.2 215.0,181.1 216.0,176.0 217.0,170.9 218.0,166.0 219.0,161.1 220.0,156.2 221.0,151.5 222.0,146.9 223.0,142.4 224.0,138.0 225.0,133.8 226.0,129.8 227.0,125.9 228.0,122.1 229.0,118.6 230.0,115.3 231.0,112.1 232.0,109.2 233.0,106.5 234.0,104.0 235.0,101.7 236.0,99.7 237.0,97.9 238.0,96.4 239.0,95.1 240.0,94.1 241.0,93.3 242.0,92.8 243.0,92.5 244.0,92.5 245.0,92.8 246.0,93.3 247.0,94.1 248.0,95.1 249.0,96.4 250.0,97.9 251.0,99.7 252.0,101.7 253.0,104.0 254.0,106.5 255.0,109.2 256.0,112.1 257.0,115.3 258.0,118.6 259.0,122.1 260.0,125.9 261.0,129.8 262.0,133.8 263.0,138.0 264.0,142.4 265.0,146.9 266.0,151.5 267.0,156.2 268.0,161.1" fill="none" stroke="#000" stroke-width="1.1" stroke-linejoin="round" shape-rendering="crispEdges"/><rect x="42" y="275" width="4" height="2" fill="#fff" shape-rendering="crispEdges"/></svg><svg width="286" height="405" viewBox="0 0 286 405" style="position:absolute;left:0;top:0;transform:translateZ(0)"><text x="15" y="359.3" font-size="4" fill="#7a7a7a" font-family="Liberation Sans" textLength="30" lengthAdjust="spacingAndGlyphs">Memory size:8192</text><text x="15" y="364.3" font-size="4" fill="#7a7a7a" font-family="Liberation Sans" textLength="48.5" lengthAdjust="spacingAndGlyphs">Primary sources: A (trailing)</text><text x="15" y="369.3" font-size="4" fill="#7a7a7a" font-family="Liberation Sans" textLength="34" lengthAdjust="spacingAndGlyphs">Primary filter: 3.3us/1</text><text x="15" y="376.3" font-size="4" fill="#7a7a7a" font-family="Liberation Sans" textLength="41" lengthAdjust="spacingAndGlyphs">Double click to modify ...</text></svg></div>
<div class="a" style="left:455px;top:42px;width:181px;height:217px;background:#fff;box-shadow:inset -1px -1px #fff,inset 1px 1px #808080,inset -2px -2px #D4D0C8,inset 2px 2px #404040"><div class="a" style="left:4px;top:3px;width:11px;height:11px;border:1px solid #808080;background:#fff"><svg class="a" style="left:1px;top:1px" width="7" height="7" shape-rendering="crispEdges"><rect x="0" y="2" width="1" height="3"/><rect x="1" y="3" width="1" height="3"/><rect x="2" y="4" width="1" height="3"/><rect x="3" y="3" width="1" height="3"/><rect x="4" y="2" width="1" height="3"/><rect x="5" y="1" width="1" height="3"/><rect x="6" y="0" width="1" height="3"/></svg></div><div class="lt" style="left:19.5px;top:3px">Main screen</div><div class="a" style="left:4px;top:16px;width:11px;height:11px;border:1px solid #808080;background:#fff"></div><div class="lt" style="left:19.5px;top:16px">Quickview</div><div class="a" style="left:4px;top:29px;width:11px;height:11px;border:1px solid #808080;background:#fff"><svg class="a" style="left:1px;top:1px" width="7" height="7" shape-rendering="crispEdges"><rect x="0" y="2" width="1" height="3"/><rect x="1" y="3" width="1" height="3"/><rect x="2" y="4" width="1" height="3"/><rect x="3" y="3" width="1" height="3"/><rect x="4" y="2" width="1" height="3"/><rect x="5" y="1" width="1" height="3"/><rect x="6" y="0" width="1" height="3"/></svg></div><div class="lt" style="left:19.5px;top:29px">General info</div><div class="a" style="left:4px;top:42px;width:11px;height:11px;border:1px solid #808080;background:#fff"><svg class="a" style="left:1px;top:1px" width="7" height="7" shape-rendering="crispEdges"><rect x="0" y="2" width="1" height="3"/><rect x="1" y="3" width="1" height="3"/><rect x="2" y="4" width="1" height="3"/><rect x="3" y="3" width="1" height="3"/><rect x="4" y="2" width="1" height="3"/><rect x="5" y="1" width="1" height="3"/><rect x="6" y="0" width="1" height="3"/></svg></div><div class="lt" style="left:19.5px;top:42px">Timebase settings</div><div class="a" style="left:4px;top:55px;width:11px;height:11px;border:1px solid #808080;background:#fff"><svg class="a" style="left:1px;top:1px" width="7" height="7" shape-rendering="crispEdges"><rect x="0" y="2" width="1" height="3"/><rect x="1" y="3" width="1" height="3"/><rect x="2" y="4" width="1" height="3"/><rect x="3" y="3" width="1" height="3"/><rect x="4" y="2" width="1" height="3"/><rect x="5" y="1" width="1" height="3"/><rect x="6" y="0" width="1" height="3"/></svg></div><div class="lt" style="left:19.5px;top:55px">Trigger settings</div><div class="a" style="left:4px;top:68px;width:11px;height:11px;border:1px solid #808080;background:#fff"></div><div class="lt" style="left:19.5px;top:68px">Range settings</div><div class="a" style="left:4px;top:81px;width:11px;height:11px;border:1px solid #808080;background:#fff"></div><div class="lt" style="left:19.5px;top:81px">Free text 1</div><div class="a" style="left:4px;top:94px;width:11px;height:11px;border:1px solid #808080;background:#fff"><svg class="a" style="left:1px;top:1px" width="7" height="7" shape-rendering="crispEdges"><rect x="0" y="2" width="1" height="3"/><rect x="1" y="3" width="1" height="3"/><rect x="2" y="4" width="1" height="3"/><rect x="3" y="3" width="1" height="3"/><rect x="4" y="2" width="1" height="3"/><rect x="5" y="1" width="1" height="3"/><rect x="6" y="0" width="1" height="3"/></svg></div><div class="lt" style="left:19.5px;top:94px">Free text 2</div></div>
<div class="a" style="left:455px;top:267px;width:1px;height:112px;background:#808080"></div>
<div class="a" style="left:456px;top:268px;width:1px;height:110px;background:#fff"></div>
<div class="a" style="left:455px;top:266px;width:8px;height:1px;background:#808080"></div>
<div class="a" style="left:456px;top:267px;width:7px;height:1px;background:#fff"></div>
<div class="a" style="left:526px;top:266px;width:109px;height:1px;background:#808080"></div>
<div class="a" style="left:526px;top:267px;width:108px;height:1px;background:#fff"></div>
<div class="a" style="left:634px;top:266px;width:1px;height:113px;background:#808080"></div>
<div class="a" style="left:635px;top:266px;width:1px;height:114px;background:#fff"></div>
<div class="a" style="left:455px;top:378px;width:180px;height:1px;background:#808080"></div>
<div class="a" style="left:455px;top:379px;width:181px;height:1px;background:#fff"></div>
<div class="t" style="left:463px;top:259px;height:16px;line-height:16px;font-size:14px;letter-spacing:-0.45px">Object info</div>
<div class="t" style="left:463px;top:283px;line-height:16px;font-size:14px">Name:
Position:
Size:
Rect:</div>
<div class="t" style="left:503px;top:283px;line-height:16px;font-size:14px">N/A</div>
<div class="t" style="left:519px;top:299px;line-height:16px;font-size:14px">N/A</div>
<div class="t" style="left:503px;top:315px;line-height:16px;font-size:14px">N/A
N/A</div>
</body></html>
